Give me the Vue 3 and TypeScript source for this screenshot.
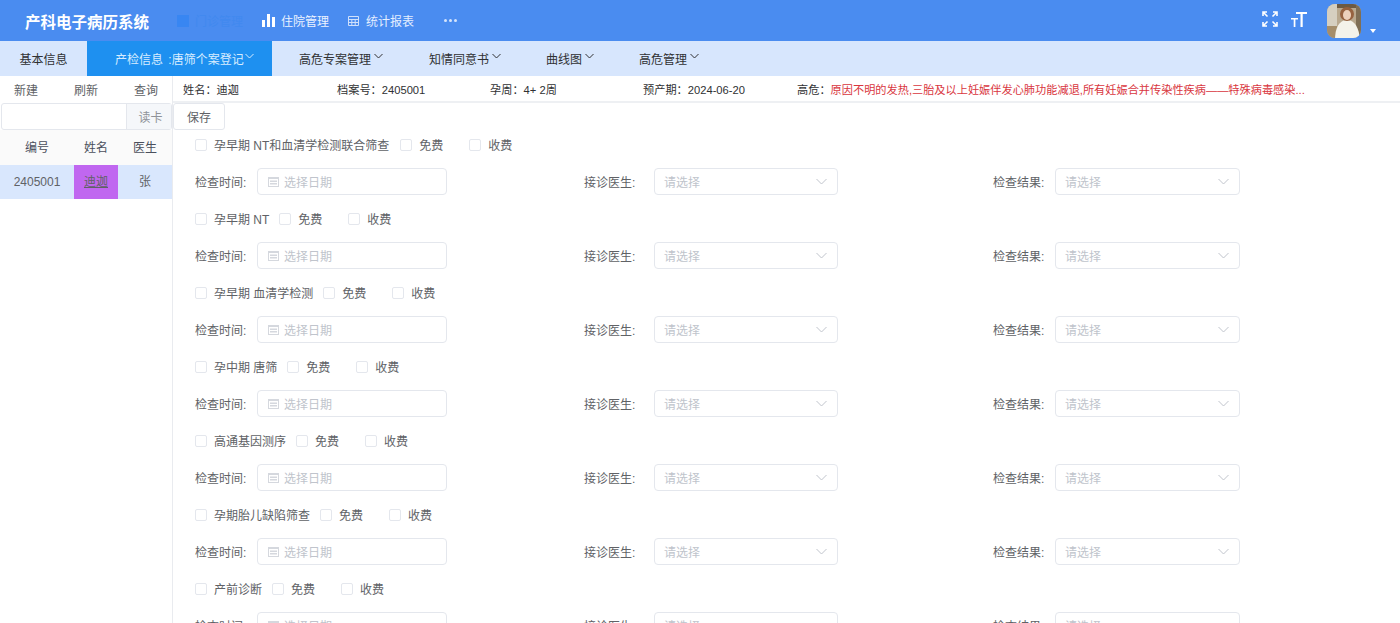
<script setup lang="ts">
const navItems = ['住院管理', '统计报表']
const tabs = ['高危专案管理', '知情同意书', '曲线图', '高危管理']
const sections = [
  { name: '孕早期 NT和血清学检测联合筛查' },
  { name: '孕早期 NT' },
  { name: '孕早期 血清学检测' },
  { name: '孕中期 唐筛' },
  { name: '高通基因测序' },
  { name: '孕期胎儿缺陷筛查' },
  { name: '产前诊断' },
]
</script>

<template>
  <div class="page">
    <header class="top">
      <div class="logo">产科电子病历系统</div>
      <nav class="nav">
        <span class="nav-item hidden-item">
          <i class="active-icon"></i>
          <span class="faded">门诊管理</span>
        </span>
        <span class="nav-item nav-zy">
          <svg width="13" height="13" viewBox="0 0 13 13"><path fill="#fff" d="M0 6h3v7H0zM5 0h3v13H5zM10 3h3v10h-3z" /></svg>
          {{ navItems[0] }}
        </span>
        <span class="nav-item nav-tj">
          <svg width="11" height="10" viewBox="0 0 11 10" fill="none" stroke="#cfe0fb" stroke-width="1"><path d="M.5.5h10v9H.5zM.5 3.500h10M.5 6.500h10M3.800 3.500v6M7.200 3.500v6" /></svg>
          {{ navItems[1] }}
        </span>
        <span class="more"><i></i><i></i><i></i></span>
      </nav>
      <div class="top-right">
        <svg class="tool-icon" width="16" height="16" viewBox="0 0 16 16" fill="none" stroke="#fff" stroke-width="1.600"><path d="M1 5V1h4M11 1h4v4M15 11v4h-4M5 15H1v-4M1.500 1.500l4 4M14.500 1.500l-4 4M14.500 14.500l-4-4M1.500 14.500l4-4" /></svg>
        <svg class="tool-icon font-icon" width="16" height="16" viewBox="0 0 16 16" fill="#fff"><path d="M5 1h11v2h-4.300v13H9.500V3H5zM0 7h7v1.600H4.400V16H2.700V8.600H0z" /></svg>
        <div class="avatar">
          <svg width="34" height="34" viewBox="0 0 34 34">
            <defs><filter id="soft"><feGaussianBlur stdDeviation="0.7" /></filter></defs>
            <rect width="34" height="34" fill="#b9a88e" />
            <g filter="url(#soft)">
              <rect x="-2" y="-2" width="12" height="24" fill="#d6cfc0" />
              <rect x="-2" y="22" width="12" height="16" fill="#a58d6b" />
              <rect x="10" y="-2" width="26" height="6" fill="#6d5a42" />
              <rect x="29" y="-2" width="7" height="40" fill="#7f6e55" />
              <path fill="#f4f2ea" d="M8 36c0-12 4-20 12-20s12 8 13 20z" />
              <circle cx="20" cy="10" r="7" fill="#96623f" />
              <ellipse cx="20" cy="11" rx="4" ry="5" fill="#ecd0bb" />
            </g>
          </svg>
        </div>
        <i class="caret"></i>
      </div>
    </header>

    <div class="tabs">
      <div class="tab tab-basic">基本信息</div>
      <div class="tab tab-active">
        产检信息 :唐筛个案登记
        <svg class="chev" width="9" height="6" viewBox="0 0 9 6" fill="none" stroke="currentColor"><path d="M.5 1l4 4 4-4" /></svg>
      </div>
      <div v-for="t in tabs" :key="t" class="tab tab-menu">
        {{ t }}
        <svg class="chev" width="9" height="6" viewBox="0 0 9 6" fill="none" stroke="currentColor"><path d="M.5 1l4 4 4-4" /></svg>
      </div>
    </div>

    <div class="main">
      <aside class="side">
        <div class="side-actions">
          <span>新建</span><span>刷新</span><span>查询</span>
        </div>
        <div class="read-card">
          <div class="card-input"></div>
          <div class="card-btn">读卡</div>
        </div>
        <div class="grid-row grid-head">
          <span>编号</span><span>姓名</span><span>医生</span>
        </div>
        <div class="grid-row grid-body">
          <span>2405001</span><span class="patient">迪迦</span><span>张</span>
        </div>
      </aside>

      <section class="content">
        <div class="info">
          <span class="i1">姓名：迪迦</span>
          <span class="i2">档案号：2405001</span>
          <span class="i3">孕周：4+ 2周</span>
          <span class="i4">预产期：2024-06-20</span>
          <span class="i5">高危：<b>原因不明的发热,三胎及以上妊娠伴发心肺功能减退,所有妊娠合并传染性疾病——特殊病毒感染...</b></span>
        </div>
        <div class="save-bar"><button class="save">保存</button></div>
        <div class="form">
          <div v-for="s in sections" :key="s.name" class="block">
            <div class="check-row">
              <label class="check"><i class="box"></i>{{ s.name }}</label>
              <label class="check"><i class="box"></i>免费</label>
              <label class="check"><i class="box"></i>收费</label>
            </div>
            <div class="field-row">
              <div class="field">
                <span class="lbl">检查时间:</span>
                <div class="ctl date">
                  <svg width="11" height="11" viewBox="0 0 11 11"><path fill="#d5d8de" d="M0 1h11v10H0z" /><path fill="#fff" d="M1 3h9v7H1z" /><path fill="#d5d8de" d="M2 4.500h7v1.500H2zM2 7h7v1.500H2z" /></svg>
                  选择日期
                </div>
              </div>
              <div class="field">
                <span class="lbl lbl-wide">接诊医生:</span>
                <div class="ctl sel sel-narrow">
                  请选择
                  <svg width="11" height="7" viewBox="0 0 11 7" fill="none" stroke="#c0c4cc"><path d="M.5 1l5 5 5-5" /></svg>
                </div>
              </div>
              <div class="field">
                <span class="lbl">检查结果:</span>
                <div class="ctl sel">
                  请选择
                  <svg width="11" height="7" viewBox="0 0 11 7" fill="none" stroke="#c0c4cc"><path d="M.5 1l5 5 5-5" /></svg>
                </div>
              </div>
            </div>
          </div>
        </div>
      </section>
    </div>
  </div>
</template>

<style>
html, body {
  margin: 0;
  height: 100%;
  overflow: hidden;
  background: #fff;
}
</style>

<style scoped>
.page {
  width: 1400px;
  height: 623px;
  overflow: hidden;
  display: flex;
  flex-direction: column;
  font-family: "Liberation Sans", "Noto Sans CJK SC", sans-serif;
  font-size: 12px;
  color: #606266;
}

.top {
  height: 41px;
  flex: none;
  display: flex;
  align-items: center;
  background: #4a8cf0;
  color: #fff;
}

.logo {
  margin-left: 25px;
  width: 152px;
  font-size: 15.500px;
  font-weight: 700;
}

.nav {
  display: flex;
  align-items: center;
}

.nav-item {
  display: flex;
  align-items: center;
  gap: 6px;
}

.hidden-item {
  width: 85px;
}

.active-icon {
  width: 12px;
  height: 12px;
  background: #3886f2;
}

.faded {
  color: #4189ef;
}

.nav-zy {
  width: 86px;
  color: #eaf2ff;
}

.nav-tj {
  width: 96px;
  gap: 7px;
  color: #e4eeff;
}

.more {
  display: flex;
  gap: 2px;
}

.more i {
  width: 3px;
  height: 3px;
  border-radius: 50%;
  background: #d5e4fc;
}

.top-right {
  margin-left: auto;
  display: flex;
  align-items: center;
  padding-right: 24px;
}

.tool-icon {
  margin-bottom: 4px;
}

.font-icon {
  margin-left: 13px;
}

.avatar {
  width: 34px;
  height: 34px;
  margin: 0 0 0 20px;
  border-radius: 8px;
  overflow: hidden;
}

.caret {
  margin: 20px 0 0 9px;
  border: 3.500px solid transparent;
  border-top: 4px solid #fff;
  border-bottom: 0;
}

.tabs {
  height: 35px;
  flex: none;
  display: flex;
  background: #d7e6fd;
  color: #303133;
}

.tab {
  display: flex;
  align-items: center;
  gap: 3px;
  white-space: nowrap;
}

.tab-basic {
  width: 87px;
  justify-content: center;
}

.tab-active {
  width: 185px;
  box-sizing: border-box;
  padding-left: 28px;
  margin-right: 5px;
  gap: 1px;
  background: #1e90f0;
  color: #d7ecff;
  word-spacing: 2px;
}

.tab-menu {
  padding: 0 23px 0 22px;
}

.tab-menu:nth-child(3) {
  padding-right: 24px;
}

.chev {
  margin-bottom: 5px;
}

.main {
  flex: 1;
  display: flex;
  min-height: 0;
}

.side {
  width: 172px;
  flex: none;
  border-right: 1px solid #e9ebef;
}

.side-actions {
  height: 27px;
  display: flex;
  align-items: center;
  justify-content: space-between;
  padding: 0 14px;
}

.read-card {
  height: 27px;
  margin-left: 1px;
  display: flex;
  border: 1px solid #e4e7ed;
  border-radius: 3px;
  box-sizing: border-box;
}

.card-input {
  flex: 1;
}

.card-btn {
  width: 45px;
  box-sizing: border-box;
  padding-left: 3px;
  display: flex;
  align-items: center;
  justify-content: center;
  background: #f5f7fa;
  border-left: 1px solid #e4e7ed;
  color: #909399;
}

.grid-row {
  display: grid;
  grid-template-columns: 74px 44px 1fr;
  text-align: center;
}

.grid-head {
  height: 35px;
  padding-bottom: 2px;
  box-sizing: border-box;
  align-items: center;
  background: #fafafa;
  color: #4a4f5c;
}

.grid-body {
  height: 34px;
  line-height: 34px;
  background: #d9e7fd;
}

.patient {
  background: #c067f0;
  text-decoration: underline;
}

.content {
  flex: 1;
  min-width: 0;
}

.info {
  height: 27px;
  box-sizing: border-box;
  padding-top: 1px;
  display: flex;
  align-items: center;
  border-bottom: 2px solid #eef0f3;
  color: #303133;
  white-space: nowrap;
  font-size: 11.200px;
}

.info span {
  flex: none;
}

.i1 {
  width: 154px;
  margin-left: 10px;
}

.i2 {
  width: 153px;
}

.i3 {
  width: 153px;
}

.i4 {
  width: 154px;
}

.i5 b {
  font-weight: 400;
  color: #d9363e;
}

.save-bar {
  height: 27px;
}

.save {
  display: block;
  width: 52px;
  height: 27px;
  padding: 0;
  font: inherit;
  color: #606266;
  background: #fff;
  border: 1px solid #e4e7ed;
  border-radius: 3px;
}

.form {
  padding: 1px 0 0 22px;
}

.block {
  height: 74px;
}

.check-row {
  height: 26px;
  box-sizing: border-box;
  display: flex;
  align-items: center;
  gap: 10px;
}

.block:first-child .check-row {
  padding-top: 1px;
}

.block:first-child .check:first-child {
  margin-right: 1px;
}

.check {
  display: flex;
  align-items: center;
  gap: 7px;
}

.check:nth-child(2) {
  margin-right: 16px;
}

.box {
  width: 12px;
  height: 12px;
  margin-top: 1px;
  border: 1px solid #e4e7ed;
  border-radius: 2px;
  box-sizing: border-box;
  background: #fff;
}

.field-row {
  display: grid;
  grid-template-columns: 389px 409px 1fr;
  margin-top: 11px;
}

.field {
  display: flex;
  align-items: center;
}

.lbl {
  width: 62px;
  flex: none;
}

.lbl-wide {
  width: 70px;
}

.ctl {
  height: 27px;
  box-sizing: border-box;
  display: flex;
  align-items: center;
  border: 1px solid #e4e7ed;
  border-radius: 4px;
  color: #c0c4cc;
  background: #fff;
}

.date {
  width: 190px;
  padding-left: 10px;
  gap: 5px;
}

.sel {
  width: 185px;
  justify-content: space-between;
  padding: 0 10px 0 9px;
}

.sel-narrow {
  width: 184px;
}
</style>
